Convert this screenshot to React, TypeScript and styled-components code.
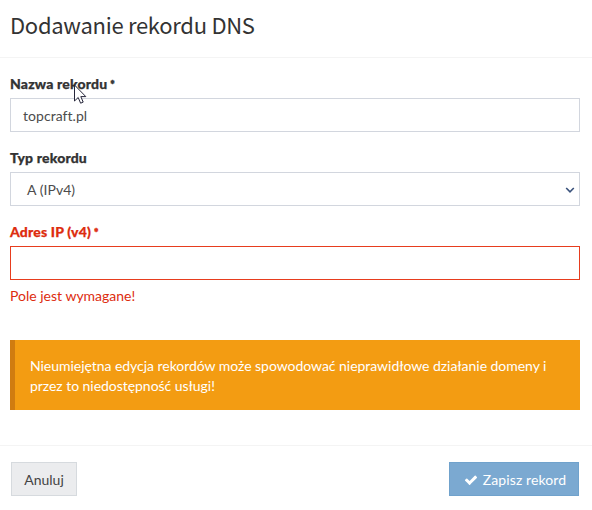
import React from 'react';
import styled, { createGlobalStyle } from 'styled-components';

const GlobalStyle = createGlobalStyle`
  * { box-sizing: border-box; }
  body {
    margin: 0;
    background: #fff;
    color: #333;
    font: 14px/20px Lato, sans-serif;
  }
`;

const Dialog = styled.main`
  position: relative;
  width: 592px;
  height: 510px;
  overflow: hidden;
  background: #fff;
`;

const Header = styled.header`
  height: 58px;
  padding: 7px 10px 0;
  border-bottom: 1px solid #f4f4f4;
`;

const Title = styled.h1`
  margin: 0;
  font: 400 22px/34px 'Noto Sans CJK JP', sans-serif;
  letter-spacing: -0.29px;
  color: #333;
  white-space: nowrap;
`;

const Body = styled.form`
  padding: 15px 12px 0 10px;
`;

const Field = styled.div<{ $invalid?: boolean }>`
  margin-bottom: 15px;
  color: ${(p) => (p.$invalid ? '#dd2c0e' : '#333')};
`;

const Label = styled.label`
  display: block;
  height: 20px;
  margin-bottom: 5px;
  padding-top: 1px;
  font-weight: 900;
  letter-spacing: 0.17px;
  -webkit-text-stroke: 0.25px currentColor;
`;

const Required = styled.span`
  margin-left: 3px;
  font-size: 10.5px;
  -webkit-text-stroke: 0.5px currentColor;
`;

const Control = styled.div<{ $invalid?: boolean; $indent?: number }>`
  display: flex;
  align-items: center;
  justify-content: space-between;
  height: 34px;
  padding: 2px 4px 0 ${(p) => p.$indent ?? 12}px;
  border: 1px solid ${(p) => (p.$invalid ? '#e73d1e' : '#d2d6de')};
  color: #4c4c4c;
  letter-spacing: 0.05px;
`;

const Help = styled.p`
  margin: 6px 0 0;
`;

const Alert = styled.div`
  height: 70px;
  margin-top: 34px;
  padding: 16px 15px 14px;
  border-left: 5px solid #d07c10;
  background: #f39c12;
  color: #fff;
  letter-spacing: -0.04px;
`;

const Footer = styled.footer`
  display: flex;
  justify-content: space-between;
  margin-top: 35px;
  padding: 16px 13px 0 11px;
  border-top: 1px solid #f4f4f4;
`;

const Button = styled.button<{ $primary?: boolean }>`
  display: flex;
  align-items: center;
  justify-content: center;
  gap: 5px;
  width: ${(p) => (p.$primary ? 130 : 66)}px;
  height: 34px;
  padding: 2px 0 0 ${(p) => (p.$primary ? 2 : 0)}px;
  border: 1px solid ${(p) => (p.$primary ? '#70a2cc' : '#d6dade')};
  background: ${(p) => (p.$primary ? '#7ba9d1' : '#ebecee')};
  color: ${(p) => (p.$primary ? '#fff' : '#444')};
  font: inherit;
  letter-spacing: ${(p) => (p.$primary ? 0.1 : 0)}px;
`;

const Pointer = styled.svg`
  position: absolute;
  left: 74px;
  top: 84px;
`;

export default function App() {
  return (
    <>
      <GlobalStyle />
      <Dialog>
        <Header>
          <Title>Dodawanie rekordu DNS</Title>
        </Header>
        <Body>
          <Field>
            <Label>Nazwa rekordu<Required>*</Required></Label>
            <Control>topcraft.pl</Control>
          </Field>
          <Field>
            <Label>Typ rekordu</Label>
            <Control $indent={16}>
              A (IPv4)
              <svg width="10" height="7" viewBox="0 0 10 7" fill="none">
                <path d="M1.2 1 5 4.8 8.8 1" stroke="#3a527c" strokeWidth="1.6" />
              </svg>
            </Control>
          </Field>
          <Field $invalid>
            <Label>Adres IP (v4)<Required>*</Required></Label>
            <Control $invalid />
            <Help>Pole jest wymagane!</Help>
          </Field>
          <Alert>
            Nieumiejętna edycja rekordów może spowodować nieprawidłowe działanie domeny i przez to niedostępność usługi!
          </Alert>
        </Body>
        <Footer>
          <Button type="button">Anuluj</Button>
          <Button type="button" $primary>
            <svg width="14" height="14" viewBox="0 0 1792 1792" fill="#fff">
              <path d="M1671 566q0 40-28 68l-724 724-136 136q-28 28-68 28t-68-28l-136-136-362-362q-28-28-28-68t28-68l136-136q28-28 68-28t68 28l294 295 656-657q28-28 68-28t68 28l136 136q28 28 28 68z" />
            </svg>
            Zapisz rekord
          </Button>
        </Footer>
        <Pointer width="13" height="20" viewBox="0 0 13 20">
          <path d="M.5 1v16l3.7-3.5 2.4 5.7 2.6-1.1-2.4-5.5h5z" fill="#fff" stroke="#26263a" />
        </Pointer>
      </Dialog>
    </>
  );
}
